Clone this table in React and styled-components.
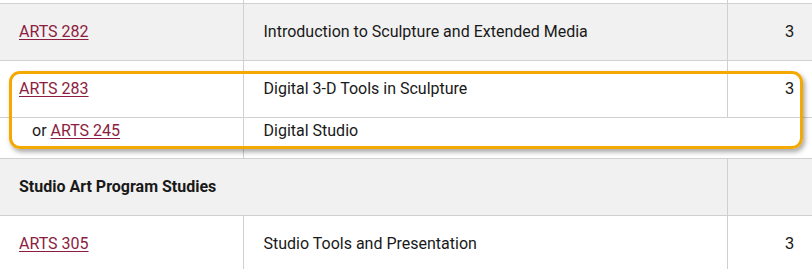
import React from "react";
import styled, { createGlobalStyle } from "styled-components";

const courses = [
  { kind: "course", code: "ARTS 282", title: "Introduction to Sculpture and Extended Media", hours: "3", shade: true },
  { kind: "course", code: "ARTS 283", title: "Digital 3-D Tools in Sculpture", hours: "3", top: true },
  { kind: "alt", code: "ARTS 245", title: "Digital Studio" },
  { kind: "heading", title: "Studio Art Program Studies", shade: true },
  { kind: "course", code: "ARTS 305", title: "Studio Tools and Presentation", hours: "3" },
];

function App() {
  return (
    <>
      <GlobalStyle />
      <Wrapper>
        <Table>
          <colgroup>
            <col style={{ width: 243 }} />
            <col style={{ width: 484 }} />
            <col />
          </colgroup>
          <tbody>
            {/* bottom edge of the previous row */}
            <tr>
              <Spacer />
              <Spacer />
              <Spacer />
            </tr>
            {courses.map((c, i) => {
              if (c.kind === "heading") {
                return (
                  <Row key={i} $shade={c.shade}>
                    <Heading colSpan={2}>{c.title}</Heading>
                    <HoursCell />
                  </Row>
                );
              }
              if (c.kind === "alt") {
                return (
                  <Row key={i} $short>
                    <CodeCell $alt>
                      or <CourseLink href="#">{c.code}</CourseLink>
                    </CodeCell>
                    <TitleCell colSpan={2}>{c.title}</TitleCell>
                  </Row>
                );
              }
              return (
                <Row key={i} $shade={c.shade} $top={c.top}>
                  <CodeCell>
                    <CourseLink href="#">{c.code}</CourseLink>
                  </CodeCell>
                  <TitleCell>{c.title}</TitleCell>
                  <HoursCell>{c.hours}</HoursCell>
                </Row>
              );
            })}
          </tbody>
        </Table>
        <Highlight />
      </Wrapper>
    </>
  );
}

const GlobalStyle = createGlobalStyle`
  body {
    margin: 0;
    background: #ffffff;
    font-family: Roboto, "Liberation Sans", Arial, sans-serif;
    color: #191919;
    overflow: hidden;
  }
`;

// 전체 래퍼
const Wrapper = styled.div`
  position: relative;
  width: 812px;
  height: 269px;
  overflow: hidden;
`;

const Table = styled.table`
  width: 812px;
  border-collapse: collapse;
  table-layout: fixed;
  font-size: 16px;
  line-height: 19px;

  td {
    border: 1px solid #d0d0d0;
    box-sizing: border-box;
  }
  td:first-child {
    border-left: none;
  }
  td:last-child {
    border-right: none;
  }
  tr:first-child td {
    border-top: none;
  }
`;

const Spacer = styled.td`
  height: 3px;
  padding: 0;
`;

const Row = styled.tr`
  background: ${(p) => (p.$shade ? "#f1f1f1" : "#ffffff")};

  td {
    height: ${(p) => (p.$short ? "41px" : "57px")};
    vertical-align: ${(p) => (p.$short ? "top" : "middle")};
    padding-top: ${(p) => (p.$short ? "3px" : "0")};
    padding-bottom: 0;
  }
`;

const CodeCell = styled.td`
  padding-left: ${(p) => (p.$alt ? "32px" : "19px")};
  padding-right: 10px;
`;

const TitleCell = styled.td`
  padding-left: 20px;
  padding-right: 10px;
`;

const HoursCell = styled.td`
  padding-right: 18px;
  text-align: right;
  font-family: "Liberation Sans", Arial, sans-serif;
`;

const Heading = styled.td`
  padding-left: 19px;
  font-weight: 700;
`;

const CourseLink = styled.a`
  color: #8c1d40;
  text-decoration: underline;
  text-underline-offset: 2px;
  text-decoration-thickness: 1px;
`;

// 강조 박스
const Highlight = styled.div`
  position: absolute;
  left: 9px;
  top: 71px;
  width: 794px;
  height: 78px;
  box-sizing: border-box;
  border: 3px solid #f3a900;
  border-radius: 11px;
  box-shadow: 2px 3px 5px rgba(0, 0, 0, 0.35);
  pointer-events: none;
`;

export default App;
